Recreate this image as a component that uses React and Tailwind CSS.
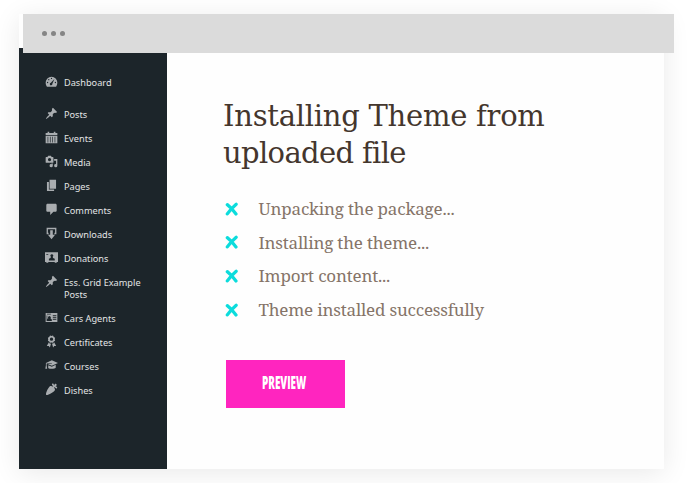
const icons = {
  dashboard: (
    <path fillRule="evenodd" d="M3 18C1.700 16.300 1 14 1 11.700a9 9 0 0 1 18 0c0 2.300-.7 4.600-2 6.300zM10 4.200a1 1 0 1 0 0 2 1 1 0 0 0 0-2zM5.800 6.200a1 1 0 1 0 0 2 1 1 0 0 0 0-2zm8.700 0L9 12a2 2 0 1 0 2.300 1.600zM4 10.500a1 1 0 1 0 0 2 1 1 0 0 0 0-2zm12 0a1 1 0 1 0 0 2 1 1 0 0 0 0-2z" />
  ),
  pin: (
    <path d="M10.44 3.02l1.82-1.82 6.36 6.35-1.83 1.82c-1.05-.68-2.48-.57-3.41.36l-.75.75c-.92.93-1.04 2.35-.35 3.41l-1.83 1.82-2.41-2.41-2.8 2.79c-.42.42-3.38 2.71-3.8 2.29s1.86-3.39 2.28-3.81l2.79-2.79L4.1 9.36l1.83-1.82c1.05.69 2.48.57 3.4-.36l.75-.75c.93-.92 1.05-2.35.36-3.41z" />
  ),
  calendar: (
    <path fillRule="evenodd" d="M1 3h3V1h2.500v2h7V1H16v2h3v3.500H1zM1 7.500h18V19H1zM4 9v8.500h1V9zm3.600 0v8.500h1V9zm3.600 0v8.500h1V9zm3.600 0v8.500h1V9z" />
  ),
  media: (
    <path fillRule="evenodd" d="M13 11V4c0-.55-.45-1-1-1h-1.670L9 1H5L3.670 3H2c-.55 0-1 .45-1 1v7c0 .55.45 1 1 1h10c.55 0 1-.45 1-1zM7 4.500a2.500 2.500 0 1 1 0 5 2.500 2.500 0 0 1 0-5zM14 6h5v10.500a2.500 2.500 0 1 1-2-2.450V9h-3zM10 14.050V13h2v3.500a2.500 2.500 0 1 1-2-2.450z" />
  ),
  pages: <path d="M7 15V1h10v14zM6 16h8v2.500H3V4.500h3z" />,
  comments: (
    <path d="M4 1h12c1.100 0 2 .9 2 2v8.500c0 1.100-.9 2-2 2h-3l-5 5v-5H4c-1.100 0-2-.9-2-2V3c0-1.100.9-2 2-2z" />
  ),
  downloads: (
    <path d="M2.500 1h15v10h-3V9h1V3.500h-11V9h1v2h-3zM8 5h4v7h3.500L10 19l-5.500-7H8z" />
  ),
  donations: (
    <path fillRule="evenodd" d="M0 2h20v15h-2v1h-3v-1H5v1H2v-1H0zM10.500 5a2.200 2.200 0 0 0-1.300 4l-.7 1.800L6 12v2.500h9V12l-2.600-1.200L11.800 9a2.200 2.200 0 0 0-1.300-4zM2 5v1h3V5z" />
  ),
  agents: (
    <path fillRule="evenodd" d="M1 3h18v14H1zM2.500 7v8.500h8V13l-2-1.500a2.200 2.200 0 1 0-3.500 0L3.500 12V7zM12 6.500V8h5.500V6.500zm0 3V11h5.500V9.500zm0 3V14h5.500v-1.500zM3 4.300v1.200h6V4.300z" />
  ),
  award: (
    <path fillRule="evenodd" d="M4.460 4.160L5 6.460l-.54 2.290 2.010 1.240L7.700 12l2.300-.54 2.300.54 1.230-2.010 2.010-1.240L15 6.460l.54-2.300-2-1.240L12.300.910 10 1.460 7.710.920l-1.250 2zM10 4a2.500 2.500 0 1 0 0 5 2.500 2.500 0 0 0 0-5zM14 11l-1.500 2.300-1.800-.4L12.500 19.200l1.700-2.200h3zM6 11l1.500 2.300 1.800-.4L7.500 19.200 5.800 17h-3z" />
  ),
  courses: (
    <path d="M10.500 2L20 6l-9.500 4.300L4 7.500l6.500-.6v-.8L2.500 7v2.500l.8 5.500H.5l.9-5.500V6zM5 9.500l5.500 2.400L16.500 9v4.500c-2 2-9 2.200-11.500.2z" />
  ),
  carrot: (
    <path d="M2 18.430c1.510 1.360 11.640-4.670 13.140-7.210.72-1.220-.13-3.010-1.520-4.440C15.200 5.730 16.590 9 17.910 8.310c.6-.32.99-1.310.7-1.920-.52-1.080-2.250-1.080-3.420-1.210.83-.2 2.820-1.050 2.860-2.250.04-.92-1.130-1.970-2.050-1.860-1.210.14-1.650 1.880-2.060 3-.05-.71-.2-2.270-.98-2.950-1.040-.91-2.290-.05-2.320 1.050-.04 1.330 2.820 2.070 1.920 3.670C11.040 4.670 9.250 4.030 8.100 4.700c-1.500 1-4.400 5-6 9.600-.7 2-.9 3.600-.1 4.130z" />
  ),
};

const menu = [
  ["pin", "Posts"],
  ["calendar", "Events"],
  ["media", "Media"],
  ["pages", "Pages"],
  ["comments", "Comments"],
  ["downloads", "Downloads"],
  ["donations", "Donations"],
  ["pin", "Ess. Grid Example Posts"],
  ["agents", "Cars Agents"],
  ["award", "Certificates"],
  ["courses", "Courses"],
  ["carrot", "Dishes"],
];

const steps = [
  "Unpacking the package...",
  "Installing the theme...",
  "Import content...",
  "Theme installed successfully",
];

function MenuItem({ icon, label }) {
  return (
    <li className="flex items-start pb-[11px] last:pb-0">
      <svg viewBox="0 0 20 20" className="mr-[6px] h-[13px] w-[13px] shrink-0 fill-[#a9adb0]">
        {icons[icon]}
      </svg>
      <span className="-mb-[2px] mt-[2px] w-[84px] leading-[12.500px]">{label}</span>
    </li>
  );
}

function Cross() {
  return (
    <svg viewBox="0 0 14 14" className="mr-[19px] h-[14px] w-[14px] shrink-0">
      <path d="M2.300 2.600C5.500 5 8.500 8.500 11 12M11.200 2.200C8 5 4.500 8.500 2.300 11.800" fill="none" stroke="#0cdcdc" strokeWidth="3.200" strokeLinecap="round" />
    </svg>
  );
}

export default function App() {
  return (
    <div className="h-[483px] w-[691px] overflow-hidden bg-white pt-[14px]">
      <div className="ml-[19px] h-[455px] w-[645px] bg-[#fefefe] shadow-[0_4px_26px_rgba(0,0,0,0.09)]">
        <header className="ml-1 flex h-[39px] w-[651px] items-center gap-[4px] bg-[#dbdbdb] pl-[19px]">
          <i className="size-[5px] rounded-full bg-[#858585]" />
          <i className="size-[5px] rounded-full bg-[#858585]" />
          <i className="size-[5px] rounded-full bg-[#858585]" />
        </header>
        <div className="-mt-[5px] flex h-[421px]">
          <nav className="w-[148px] bg-[#1c252a] pl-[26px] pt-[26.500px] font-['Noto_Sans',sans-serif] text-[9.200px] text-[#e2e4e5] [clip-path:polygon(0_0,4px_0,4px_5px,100%_5px,100%_100%,0_100%)]">
            <ul>
              <MenuItem icon="dashboard" label="Dashboard" />
            </ul>
            <ul className="pt-[19px]">
              {menu.map(([icon, label]) => (
                <MenuItem key={label} icon={icon} label={label} />
              ))}
            </ul>
          </nav>
          <main className="pl-[56px] pt-[50px]">
            <h1 className="w-[380px] whitespace-nowrap font-['DejaVu_Serif',serif] text-[29px] leading-[37px] text-[#44362d]">
              <span className="block tracking-[-0.250px]">Installing Theme from</span>
              <span className="block tracking-[-0.650px]">uploaded file</span>
            </h1>
            <ul className="mt-[20px] font-['Noto_Serif','DejaVu_Serif_Condensed','DejaVu_Serif',serif] text-[17px] tracking-[-0.190px] text-[#857468]">
              {steps.map((text) => (
                <li key={text} className="flex h-[33.670px] items-center whitespace-nowrap pl-[2px]">
                  <Cross />
                  <span className="ml-[0.500px]">{text}</span>
                </li>
              ))}
            </ul>
            <button className="ml-[3px] mt-[33px] flex h-[48px] w-[119px] items-center justify-center bg-[#ff25bf] font-['Open_Sans',sans-serif] text-[17px] font-extrabold text-white">
              <span className="-mt-[2px] -ml-[3px] scale-x-[0.580]">PREVIEW</span>
            </button>
          </main>
        </div>
      </div>
    </div>
  );
}
